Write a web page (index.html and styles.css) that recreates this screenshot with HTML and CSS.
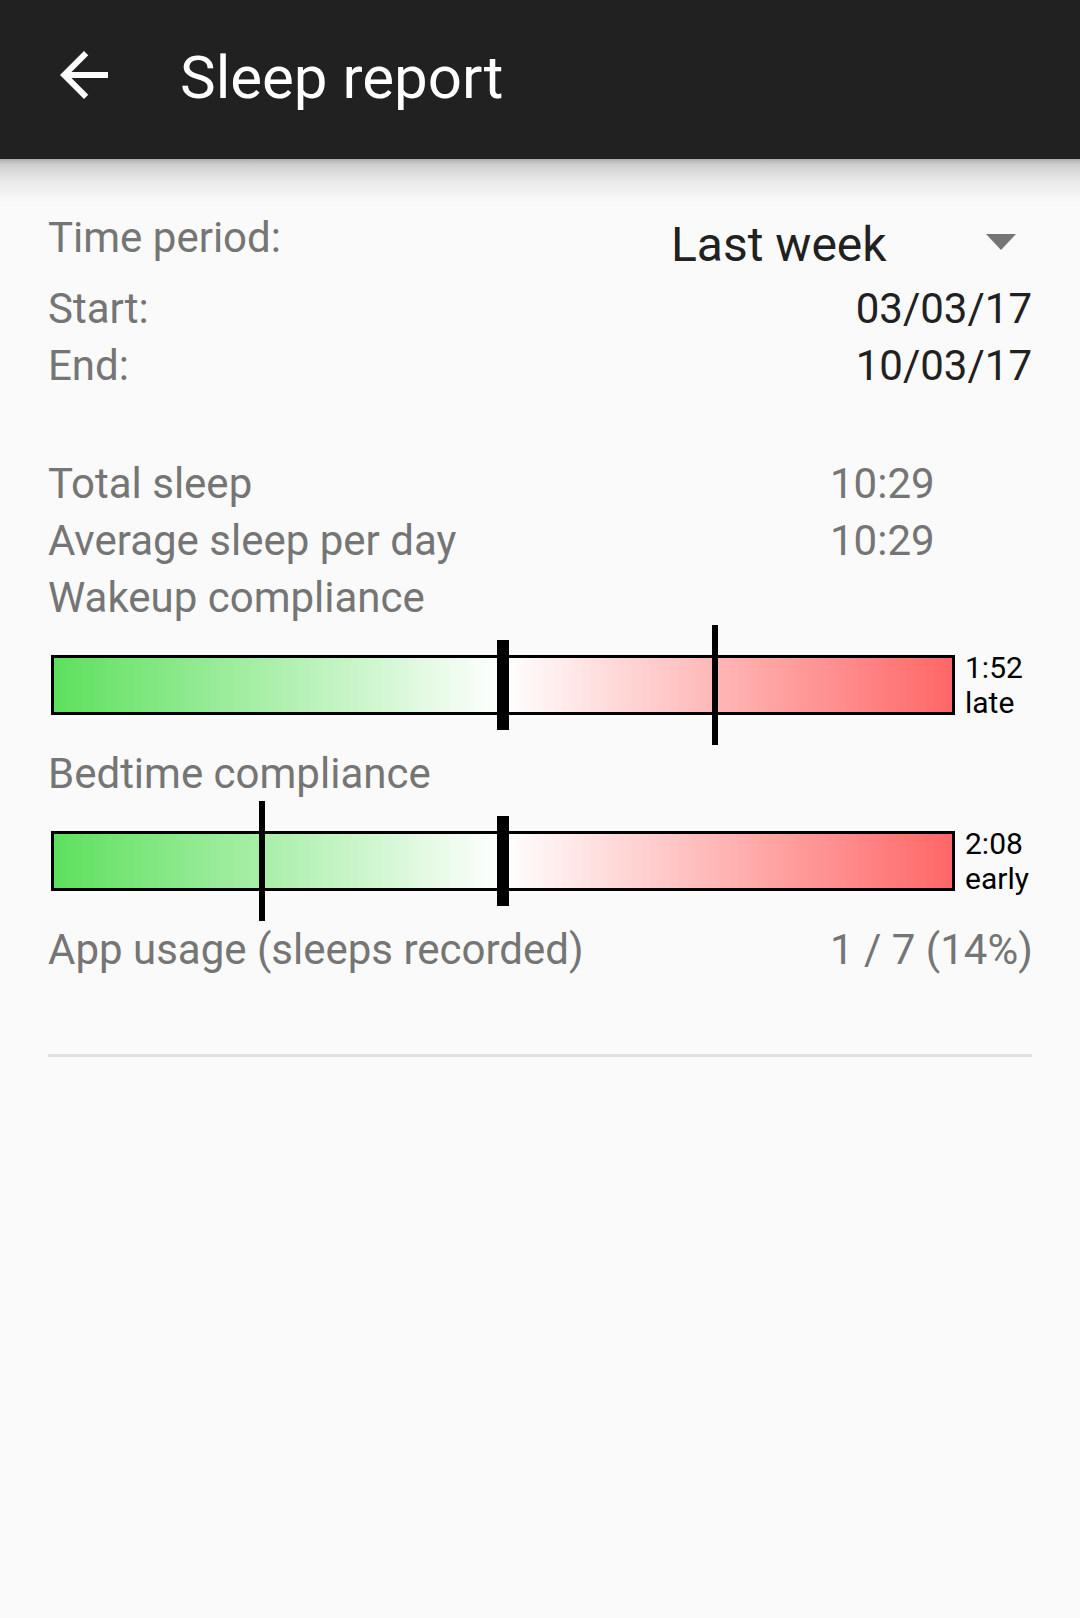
FILE: index.html
```html
<!DOCTYPE html>
<html>
<head>
<meta charset="utf-8">
<link rel="stylesheet" href="styles.css">
</head>
<body>
<header class="appbar">
  <svg class="back" viewBox="0 0 24 24" width="72" height="72"><path d="M20 11H7.83l5.59-5.59L12 4l-8 8 8 8 1.41-1.41L7.83 13H20v-2z" fill="#fff"/></svg>
  <h1 class="title">Sleep report</h1>
</header>
<main class="content">
  <div class="row period">
    <span class="label">Time period:</span>
    <div class="spinner">
      <span class="spinner-text">Last week</span>
      <svg class="caret" viewBox="0 0 30 16" width="30" height="16"><polygon points="0,0 30,0 15,16" fill="#757575"/></svg>
    </div>
  </div>
  <div class="row">
    <span class="label">Start:</span>
    <span class="value dark">03/03/17</span>
  </div>
  <div class="row">
    <span class="label">End:</span>
    <span class="value dark">10/03/17</span>
  </div>

  <div class="stats">
    <div class="row">
      <span class="label">Total sleep</span>
      <span class="stat">10:29</span>
    </div>
    <div class="row">
      <span class="label">Average sleep per day</span>
      <span class="stat">10:29</span>
    </div>
    <div class="row">
      <span class="label">Wakeup compliance</span>
    </div>
    <div class="bar-row">
      <div class="track">
        <span class="mark thick"></span>
        <span class="mark thin" style="left: 73.6%"></span>
      </div>
      <div class="bar-label">1:52<br>late</div>
    </div>
    <div class="row">
      <span class="label">Bedtime compliance</span>
    </div>
    <div class="bar-row">
      <div class="track">
        <span class="mark thin" style="left: 23.2%"></span>
        <span class="mark thick"></span>
      </div>
      <div class="bar-label">2:08<br>early</div>
    </div>
    <div class="row">
      <span class="label">App usage (sleeps recorded)</span>
      <span class="stat">1 / 7 (14%)</span>
    </div>
  </div>
  <hr class="divider">
</main>
</body>
</html>
```

FILE: styles.css
```css
html, body {
  margin: 0;
  padding: 0;
}
body {
  background: #fafafa;
  font-family: Roboto, "Noto Sans", sans-serif;
  width: 1080px;
  height: 1618px;
  overflow: hidden;
}
.appbar {
  position: relative;
  z-index: 2;
  height: 159px;
  background: #212121;
  display: flex;
  align-items: flex-start;
}
.appbar::after {
  content: "";
  position: absolute;
  left: 0;
  right: 0;
  top: 159px;
  height: 44px;
  background: linear-gradient(rgba(0,0,0,0.30) 0px, rgba(0,0,0,0.17) 6px, rgba(0,0,0,0.07) 22px, rgba(0,0,0,0) 44px);
}
.back {
  display: block;
  margin: 39px 0 0 48px;
  flex: none;
}
.title {
  margin: 43px 0 0 60px;
  font-size: 60px;
  line-height: 70px;
  font-weight: 400;
  color: #fff;
}
.content {
  padding: 50px 48px 0 48px;
}
.row {
  display: flex;
  justify-content: space-between;
  align-items: flex-start;
  font-size: 42px;
  line-height: 57px;
}
.label {
  color: #757575;
}
.value.dark {
  color: #212121;
}
.period {
  height: 71px;
}
.spinner {
  width: 361px;
  display: flex;
  justify-content: space-between;
  align-items: flex-start;
}
.spinner-text {
  font-size: 48px;
  line-height: 71px;
  color: #212121;
}
.caret {
  display: block;
  margin: 25px 16px 0 0;
}
.stats {
  margin-top: 61px;
}
.stat {
  width: 202px;
  color: #757575;
  white-space: nowrap;
}
.bar-row {
  display: flex;
  align-items: center;
  height: 60px;
  margin: 29px 0 30px 3px;
}
.track {
  position: relative;
  box-sizing: border-box;
  width: 904px;
  height: 60px;
  border: 3px solid #000;
  background: linear-gradient(to right, #5de05d 0%, #ffffff 50%, #ff6666 100%);
  flex: none;
}
.mark {
  position: absolute;
  background: #000;
  transform: translateX(-50%);
}
.mark.thick {
  left: 50%;
  top: -18px;
  width: 12px;
  height: 90px;
}
.mark.thin {
  top: -33px;
  width: 6px;
  height: 120px;
}
.bar-label {
  margin-left: 10px;
  font-size: 30px;
  line-height: 35px;
  color: #000;
  flex: none;
}
.divider {
  margin: 76px 0 0 0;
  border: 0;
  height: 3px;
  background: #e0e0e0;
}
```
